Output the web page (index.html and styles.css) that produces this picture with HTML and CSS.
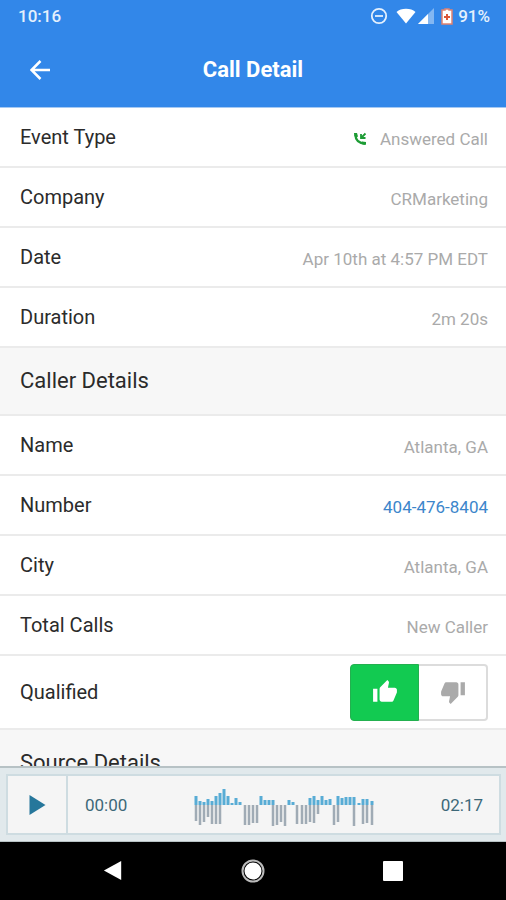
FILE: index.html
```
<!DOCTYPE html>
<html lang="en">
<head>
<meta charset="utf-8">
<meta name="viewport" content="width=device-width, initial-scale=1">
<title>Call Detail</title>
<link rel="stylesheet" href="styles.css">
</head>
<body>
<header class="top">
  <div class="status">
    <span>10:16</span>
    <div class="status-icons">
      <svg class="dnd" viewBox="0 0 18 18"><circle cx="9" cy="9" r="7.2" fill="none" stroke="#e4f0fd" stroke-width="1.8"/><path d="M5 9h8" stroke="#e4f0fd" stroke-width="1.8"/></svg>
      <svg class="wifi" viewBox="0 0 20 16"><path d="M10 15.5 0.5 4C3 1.8 6 .8 10 .8s7 1 9.500 3.200z" fill="#fff"/></svg>
      <svg class="signal" viewBox="0 0 16 16"><path d="M16 0v16H0z" fill="#83b7f2"/><path d="M10 6v10H0z" fill="#fff"/></svg>
      <svg class="battery" viewBox="0 0 12 17"><path d="M4 1h4v1h3v14H1V2h3z" fill="#fff" stroke="#e08272" stroke-width="1.500"/><path d="M3 9h6M6 6v6" stroke="#dc5637" stroke-width="2"/></svg>
      <span>91%</span>
    </div>
  </div>
  <div class="title-bar">
    <button class="back" aria-label="Back"><svg viewBox="0 0 20 20"><path d="M20 10H2M10.500 1 1.500 10l9 9" fill="none" stroke="#fff" stroke-width="2.500"/></svg></button>
    <h1>Call Detail</h1>
  </div>
</header>
<main class="content">
  <dl class="list">
    <div class="row"><dt>Event Type</dt><dd><svg class="phone" viewBox="0 0 14 14"><path d="M2.500 3C2.500 8 6 11.500 12 11.500" fill="none" stroke="#1d9c35" stroke-width="2.400"/><path d="M1 1h3l1 3.500-2.500 1.500C1.500 4.500 1 3 1 1zM9 9.500l4 .5v2.800c-2 .2-4-.3-5.500-1.300z" fill="#1d9c35"/><path d="M12.500 1.500 8 6M8 2V6h4.500" fill="none" stroke="#1d9c35" stroke-width="1.800"/></svg>Answered Call</dd></div>
    <div class="row"><dt>Company</dt><dd>CRMarketing</dd></div>
    <div class="row"><dt>Date</dt><dd>Apr 10th at 4:57 PM EDT</dd></div>
    <div class="row"><dt>Duration</dt><dd>2m 20s</dd></div>
  </dl>
  <h2>Caller Details</h2>
  <dl class="list">
    <div class="row"><dt>Name</dt><dd>Atlanta, GA</dd></div>
    <div class="row"><dt>Number</dt><dd><a href="tel:404-476-8404">404-476-8404</a></dd></div>
    <div class="row"><dt>City</dt><dd>Atlanta, GA</dd></div>
    <div class="row"><dt>Total Calls</dt><dd>New Caller</dd></div>
    <div class="row vote-row"><dt>Qualified</dt><dd class="vote">
      <button class="yes" aria-label="Qualified" aria-pressed="true"><svg viewBox="0 0 24 24"><path d="M1 21h4V9H1v12zm22-11c0-1.100-.9-2-2-2h-6.310l.95-4.570.03-.32c0-.41-.17-.79-.44-1.060L14.170 1 7.590 7.590C7.220 7.950 7 8.450 7 9v10c0 1.100.9 2 2 2h9c.83 0 1.540-.5 1.840-1.220l3.020-7.050c.09-.23.14-.47.14-.73v-2z" fill="#fff"/></svg></button>
      <button class="no" aria-label="Not qualified" aria-pressed="false"><svg viewBox="0 0 24 24"><path d="M15 3H6c-.83 0-1.540.5-1.840 1.220l-3.020 7.050c-.09.23-.14.47-.14.73v2c0 1.100.9 2 2 2h6.310l-.95 4.570-.03.32c0 .41.17.79.44 1.060L9.830 23l6.590-6.590c.36-.36.58-.86.58-1.410V5c0-1.100-.9-2-2-2zm4 0v12h4V3h-4z" fill="#aaa"/></svg></button>
    </dd></div>
  </dl>
  <h2>Source Details</h2>
</main>
<section class="player" aria-label="Recording">
  <div class="player-box">
    <button class="play" aria-label="Play"><svg viewBox="0 0 16 20"><path d="M0 0 16 10 0 20z" fill="#26779b"/></svg></button>
    <div class="track">
      <span>00:00</span>
      <svg class="wave" viewBox="0 -6 180 44" fill="none" stroke-width="2">
        <path stroke="#58acd5" stroke-width="3" d="M2 16v-9M6 16v-4M10 16v-3M14 16v-6M18 16v-4M22 16v-9M26 16v-12M30 16v-16M34 16v-9M38 16v-2M42 16v-7M46 16v-3M67 16v-9M71 16v-5M75 16v-5M79 16v-5M95 16v-5M99 16v-3M116 16v-7M120 16v-9M124 16v-5M128 16v-9M132 16v-5M136 16v-6M144 16v-9M148 16v-7M152 16v-8M156 16v-8M160 16v-8M165 16v-2M169 16v-6M173 16v-6M178 16v-4"/>
        <path stroke="#a0abb5" stroke-width="2.500" d="M2 16v16M6 16v20M10 16v17M14 16v12M18 16v19M22 16v19M26 16v19M51 16v20M55 16v20M59 16v18M63 16v18M79 16v21M83 16v20M87 16v17M91 16v21M103 16v19M108 16v19M112 16v19M116 16v17M120 16v18M124 16v9M140 16v20M144 16v17M160 16v21M169 16v19M173 16v18M178 16v20"/>
      </svg>
      <span>02:17</span>
    </div>
  </div>
</section>
<nav class="system" aria-label="System">
  <button aria-label="Back"><svg viewBox="0 0 20 22"><path d="M19 0v21L0 10.500z" fill="#fff"/></svg></button>
  <button class="home" aria-label="Home"><svg viewBox="0 0 24 24"><circle cx="12" cy="12" r="10.500" fill="none" stroke="#bbb" stroke-width="2"/><circle cx="12" cy="12" r="8.500" fill="#fff"/></svg></button>
  <button aria-label="Recent apps"><svg viewBox="0 0 20 20"><rect width="20" height="20" rx="1" fill="#fff"/></svg></button>
</nav>
</body>
</html>
```
FILE: styles.css
```
* { box-sizing: border-box; }
body {
  margin: 0;
  height: 100vh;
  display: flex;
  flex-direction: column;
  background: #fff;
  color: #2b2b2b;
  font-family: Roboto, "Liberation Sans", sans-serif;
}
button { margin: 0; padding: 0; border: 0; background: none; font: inherit; cursor: pointer; }
svg { display: block; flex: none; }
h1, h2, dl, dd { margin: 0; }

.top { flex: none; background: #3287e9; color: #fff; border-bottom: 1px solid #a5c9f3; }
.status {
  height: 32px;
  padding: 0 16px 0 18px;
  display: flex;
  align-items: center;
  justify-content: space-between;
  font-size: 17px;
  font-weight: 500;
  color: #e4f0fd;
}
.status-icons { display: flex; align-items: center; }
.dnd { width: 18px; height: 18px; margin-right: 8px; }
.wifi { width: 20px; height: 16px; margin-right: 2px; }
.signal { width: 16px; height: 16px; margin-right: 7px; }
.battery { width: 12px; height: 17px; margin-right: 5px; }
.title-bar {
  height: 75px;
  padding: 0 30px;
  display: grid;
  grid-template-columns: 20px 1fr 20px;
  align-items: center;
}
.back svg { width: 20px; height: 20px; }
h1 { font-size: 22px; font-weight: 700; text-align: center; }

.content { flex: 1; min-height: 0; overflow: hidden; }
.row {
  min-height: 60px;
  padding: 0 18px 0 20px;
  display: flex;
  align-items: center;
  justify-content: space-between;
  border-bottom: 2px solid #ebebeb;
}
dt { font-size: 20px; }
dd { display: flex; align-items: center; font-size: 17px; color: #aaa; padding-top: 3px; }
dd a { color: #3c86cb; text-decoration: none; }
.phone { width: 14px; height: 14px; margin-right: 13px; }
h2 {
  padding: 20px;
  font-size: 22px;
  line-height: 26px;
  font-weight: 400;
  background: #f7f7f7;
  border-bottom: 2px solid #ebebeb;
}
.vote-row { min-height: 74px; }
.vote { padding: 0; }
.vote button { height: 57px; width: 69px; display: flex; align-items: center; justify-content: center; }
.vote svg { width: 26px; height: 26px; }
.vote .yes { background: #12ca51; border: 1px solid #23b04f; border-radius: 4px 0 0 4px; }
.vote .no { border: 2px solid #dcdcdc; border-left: 0; border-radius: 0 4px 4px 0; }

.player { flex: none; padding: 6px 5px 6px 6px; background: #e1e9ec; border-top: 2px solid #b7c2c5; border-bottom: 1px solid #b7c2c5; }
.player-box { height: 61px; display: flex; border: 2px solid #cedce1; background: #f5f5f5; }
.play { width: 60px; display: flex; align-items: center; justify-content: center; border-right: 2px solid #cedce1; }
.play svg { width: 17px; height: 20px; }
.track { flex: 1; padding: 0 16px 0 17px; display: flex; align-items: center; justify-content: space-between; font-size: 17px; color: #3d6878; }
.wave { width: 180px; height: 44px; }

.system { flex: none; height: 58px; background: #000; display: flex; align-items: center; justify-content: center; gap: 116px; }
.system button { width: 24px; display: flex; justify-content: center; }
.system svg { width: 20px; height: 20px; }
.system .home svg { width: 24px; height: 24px; }
```
